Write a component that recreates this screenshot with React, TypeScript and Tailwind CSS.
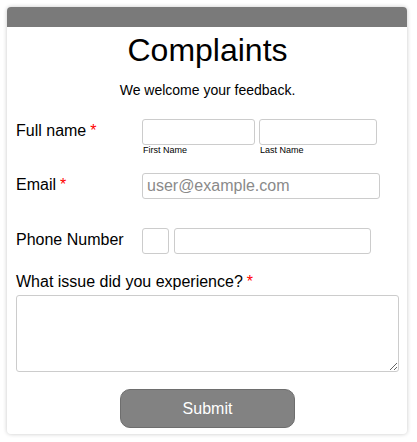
import React from 'react';

const Req = () => <span className="text-[#ff0000] ml-1">*</span>;

const inputCls =
  'h-[26px] rounded-[3px] border border-[#cccccc] bg-white px-[4px] text-[16px] text-black outline-none placeholder:text-[#8a8a8a]';

const App = () => {
  return (
    <div className="w-[417px] h-[442px] bg-white pt-[7px] pl-[7px] font-['Liberation_Sans',Arial,sans-serif] text-black">
      <div className="w-[400px] h-[427px] rounded-[4px] bg-white shadow-[0_0_4px_rgba(0,0,0,0.22)]">
        <div className="h-[20px] rounded-t-[4px] bg-[#7a7a7a]" />

        <div className="pl-[9px] pr-[8px]">
          <h1 className="mt-[7px] text-center text-[32px] leading-[32px]">Complaints</h1>
          <p className="mt-[16px] text-center text-[14px] leading-[16px]">We welcome your feedback.</p>

          <div className="mt-[21px] flex">
            <label className="w-[126px] pt-[3px] text-[16px] leading-[18px]">
              Full name<Req />
            </label>
            <div className="flex gap-[4px]">
              <div className="flex flex-col">
                <input className={`${inputCls} w-[113px]`} />
                <span className="text-[9px] leading-[10px] pl-[1px]">First Name</span>
              </div>
              <div className="flex flex-col">
                <input className={`${inputCls} w-[118px]`} />
                <span className="text-[9px] leading-[10px] pl-[1px]">Last Name</span>
              </div>
            </div>
          </div>

          <div className="mt-[18px] flex">
            <label className="w-[126px] pt-[3px] text-[16px] leading-[18px]">
              Email<Req />
            </label>
            <input className={`${inputCls} w-[238px]`} placeholder="user@example.com" />
          </div>

          <div className="mt-[29px] flex">
            <label className="w-[126px] pt-[3px] text-[16px] leading-[18px]">Phone Number</label>
            <div className="flex gap-[5px]">
              <input className={`${inputCls} w-[27px]`} />
              <input className={`${inputCls} w-[197px]`} />
            </div>
          </div>

          <label className="mt-[19px] block text-[16px] leading-[18px]">
            What issue did you experience?<Req />
          </label>
          <textarea className="mt-[4px] block h-[77px] w-[383px] rounded-[3px] border border-[#cccccc] bg-white p-[4px] text-[16px] outline-none" />

          <button
            type="button"
            className="mx-auto mt-[17px] block h-[39px] w-[175px] rounded-[10px] border border-[#6e6e6e] bg-[#828282] text-[16px] text-white"
          >
            Submit
          </button>
        </div>
      </div>
    </div>
  );
};

export default App;
